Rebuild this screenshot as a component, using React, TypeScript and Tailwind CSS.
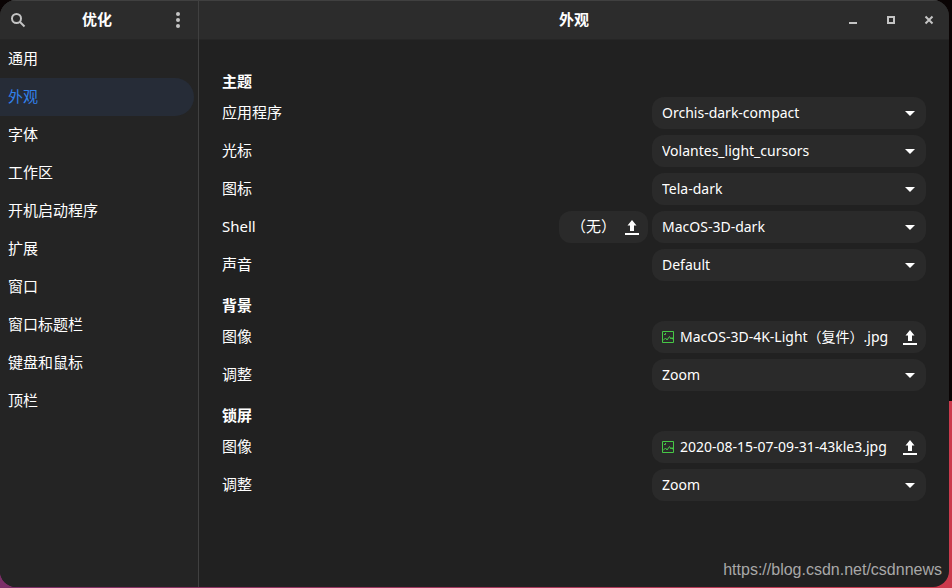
import type { ReactNode } from "react";

type SelectRow = { kind: "select"; label: string; value: string; extra?: string };
type FileRow = { kind: "file"; label: string; file: string };
type Row = SelectRow | FileRow;

const pages = ["通用", "外观", "字体", "工作区", "开机启动程序", "扩展", "窗口", "窗口标题栏", "键盘和鼠标", "顶栏"];

const sections: { title: string; rows: Row[] }[] = [
  {
    title: "主题",
    rows: [
      { kind: "select", label: "应用程序", value: "Orchis-dark-compact" },
      { kind: "select", label: "光标", value: "Volantes_light_cursors" },
      { kind: "select", label: "图标", value: "Tela-dark" },
      { kind: "select", label: "Shell", value: "MacOS-3D-dark", extra: "（无）" },
      { kind: "select", label: "声音", value: "Default" },
    ],
  },
  {
    title: "背景",
    rows: [
      { kind: "file", label: "图像", file: "MacOS-3D-4K-Light（复件）.jpg" },
      { kind: "select", label: "调整", value: "Zoom" },
    ],
  },
  {
    title: "锁屏",
    rows: [
      { kind: "file", label: "图像", file: "2020-08-15-07-09-31-43kle3.jpg" },
      { kind: "select", label: "调整", value: "Zoom" },
    ],
  },
];

const UploadIcon = () => (
  <svg className="h-4 w-4 shrink-0" viewBox="0 0 16 16" fill="currentColor" aria-hidden="true">
    <path d="M8 1 3.500 6.500H6V12h4V6.500h2.500zM1 14h14v2H1z" />
  </svg>
);

const ImageIcon = () => (
  <svg className="h-3 w-3 shrink-0 text-[#46c846]" viewBox="0 0 12 12" fill="none" stroke="currentColor" aria-hidden="true">
    <path d="M.5.5h11v11H.5z" />
    <path d="M1 9.500 3.500 7 5 9l2.500-3.500L9 8l1-1.500L11 8.500M2 3.500h1.500V2" />
  </svg>
);

const WindowButton = ({ label, children }: { label: string; children: ReactNode }) => (
  <button aria-label={label} className="flex h-full w-[38px] items-center justify-center">
    <svg className="h-4 w-4" viewBox="0 0 16 16" fill="none" stroke="currentColor" strokeWidth="2" aria-hidden="true">
      {children}
    </svg>
  </button>
);

const Sidebar = () => (
  <aside className="flex w-[199px] shrink-0 flex-col border-r border-[#404040] bg-[#242424]">
    <header className="flex h-10 items-center border-t border-b border-t-[#404040] border-b-[#262626] bg-[#2c2c2c]">
      <button aria-label="搜索" className="flex h-full w-9 items-center justify-center text-[#c4c4c4]">
        <svg className="h-4 w-4" viewBox="0 0 16 16" fill="none" stroke="currentColor" strokeWidth="2" aria-hidden="true">
          <circle cx="6.500" cy="6.500" r="4.500" />
          <path d="m10 10 4.500 4.500" />
        </svg>
      </button>
      <h1 className="flex-1 pb-0.5 text-center font-bold">优化</h1>
      <button aria-label="菜单" className="flex h-full w-10 items-center justify-center text-[#c4c4c4]">
        <svg className="h-4 w-4" viewBox="0 0 16 16" fill="currentColor" aria-hidden="true">
          <circle cx="8" cy="2" r="2" />
          <circle cx="8" cy="8" r="2" />
          <circle cx="8" cy="14" r="2" />
        </svg>
      </button>
    </header>
    <nav>
      {pages.map((page) => (
        <a
          key={page}
          href="#"
          className={
            page === "外观"
              ? "mr-1 flex h-[38px] items-center rounded-r-full bg-[#262c37] pb-0.5 pl-2 text-[#3281ea]"
              : "mr-1 flex h-[38px] items-center rounded-r-full pb-0.5 pl-2"
          }
        >
          {page}
        </a>
      ))}
    </nav>
  </aside>
);

const SettingRow = ({ row, id }: { row: Row; id: string }) => (
  <div className="flex h-8 items-center gap-1">
    <label htmlFor={id} className="flex-1 pb-0.5">
      {row.label}
    </label>
    {row.kind === "select" && row.extra && (
      <button className="flex h-8 items-center gap-2 rounded-xl bg-[#2a2a2a] pr-2 pl-3">
        <span className="pb-0.5">{row.extra}</span>
        <UploadIcon />
      </button>
    )}
    {row.kind === "select" ? (
      <div className="relative w-[274px]">
        <select id={id} className="h-8 w-full appearance-none rounded-xl bg-[#2a2a2a] pl-[10px] text-[14px]">
          <option>{row.value}</option>
        </select>
        <svg
          className="pointer-events-none absolute top-2 right-2 h-4 w-4"
          viewBox="0 0 16 16"
          fill="currentColor"
          aria-hidden="true"
        >
          <path d="M3 6h10l-5 5z" />
        </svg>
      </div>
    ) : (
      <button
        id={id}
        className="flex h-8 w-[274px] items-center gap-1.5 rounded-xl bg-[#2a2a2a] pr-2 pl-[10px] text-[14px]"
      >
        <ImageIcon />
        <span className="flex-1 text-left whitespace-nowrap">{row.file}</span>
        <UploadIcon />
      </button>
    )}
  </div>
);

const App = () => {
  return (
    <div className="relative flex min-h-screen bg-linear-to-r from-[#7c2f68] to-[#cc3a4c] font-['Noto_Sans','Noto_Sans_CJK_SC',sans-serif] text-[15px] leading-5 text-white">
      {/* dark upper part of the wallpaper */}
      <div className="absolute inset-x-0 top-0 h-[401px] bg-[#0a0404]" />
      <div className="relative mr-[3px] mb-px flex flex-1 overflow-hidden rounded-2xl bg-[#212121]">
        <Sidebar />
        <main className="flex flex-1 flex-col">
          <header className="grid h-10 grid-cols-[1fr_auto_1fr] items-center border-t border-b border-t-[#404040] border-b-[#262626] bg-[#2c2c2c]">
            <h2 className="col-start-2 pb-0.5 font-bold">外观</h2>
            <div className="flex h-full justify-end pr-px text-[#c4c4c4]">
              <WindowButton label="最小化">
                <path d="M4 11h8" />
              </WindowButton>
              <WindowButton label="最大化">
                <path d="M5 5h6v6H5z" />
              </WindowButton>
              <WindowButton label="关闭">
                <path d="m4.500 4.500 7 7m0-7-7 7" />
              </WindowButton>
            </div>
          </header>
          <div className="flex flex-col gap-[10px] px-[23px] pt-[27px]">
            {sections.map((section, s) => (
              <section key={section.title}>
                <h3 className="flex h-[30px] items-center pb-0.5 font-bold">{section.title}</h3>
                <div className="flex flex-col gap-1.5">
                  {section.rows.map((row, r) => (
                    <SettingRow key={row.label} row={row} id={`setting-${s}-${r}`} />
                  ))}
                </div>
              </section>
            ))}
          </div>
        </main>
      </div>
      <p className="absolute right-[10px] bottom-2 font-['Liberation_Sans',sans-serif] text-[16px] text-[#a8a8a8]">
        https://blog.csdn.net/csdnnews
      </p>
    </div>
  );
};

export default App;
